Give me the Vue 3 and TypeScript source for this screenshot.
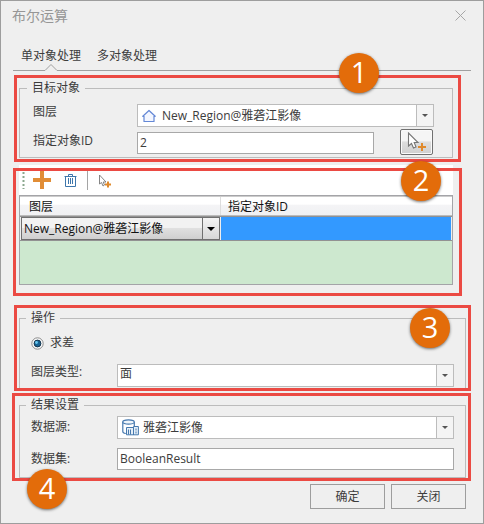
<script setup lang="ts">
import { ref } from 'vue'

interface Mark { id: number; name: string }

const tabs = ['单对象处理', '多对象处理']
const activeTab = ref(0)
const layer = 'New_Region@雅砻江影像'
const objectId = ref('2')
const datasetName = ref('BooleanResult')
const marks: Mark[] = [1, 2, 3, 4].map((id) => ({ id, name: `m${id}` }))
</script>

<template>
  <div class="dialog">
    <header class="titlebar">
      <span class="title">布尔运算</span>
      <svg class="close" width="11" height="11" viewBox="0 0 11 11"><path d="M.5.5l10 10M10.5.5l-10 10" stroke="#a6a6a6" fill="none" /></svg>
    </header>

    <nav class="tabs">
      <span v-for="(tab, i) in tabs" :key="tab" class="tab" @click="activeTab = i">{{ tab }}</span>
    </nav>
    <svg class="tabline" width="458" height="9" viewBox="0 0 458 9"><path d="M0 7.5H32L38 1.500L44 7.500H458" stroke="#a0a0a0" fill="none" /></svg>

    <section class="group target">
      <span class="legend">目标对象</span>
      <div class="row r-layer">
        <span class="label">图层</span>
        <div class="combo">
          <div class="value">
            <svg class="house" width="14" height="14" viewBox="0 0 14 14"><path d="M7 1.500L.8 7.300H2V12.500H12V7.300H13.200Z" stroke="#6488d6" stroke-width="1.200" fill="#f3f6ff" stroke-linejoin="round" /></svg>
            <span>{{ layer }}</span>
          </div>
          <i class="arrow"></i>
        </div>
      </div>
      <div class="row r-id">
        <span class="label">指定对象ID</span>
        <div class="input">{{ objectId }}</div>
        <button class="pick" type="button">
          <svg width="20" height="20" viewBox="0 0 20 20">
            <path d="M1.500 1V14L4.500 11.500L6.500 16L9 15L7.200 10.500H11Z" fill="#fff" stroke="#777" stroke-width="1.100" />
            <path d="M15 11v8M11 15h8" stroke="#e08a2c" stroke-width="2" />
          </svg>
        </button>
      </div>
    </section>

    <section class="list">
      <div class="toolbar">
        <svg width="110" height="30" viewBox="0 0 110 30">
          <path d="M4.500 7v17" stroke="#8aa78d" stroke-width="2" stroke-dasharray="2 2" />
          <path d="M23 6v18M14 15h18" stroke="#e18d36" stroke-width="4" />
          <g fill="none" stroke="#3e76ab">
            <path d="M45.500 11.500h12M49.500 11V9.500h4V11M46.500 12v9.500h10V12" />
            <path d="M49.500 13v6M51.500 13v6M53.500 13v6" />
          </g>
          <path d="M68.500 6v19" stroke="#a5a5a5" />
          <path d="M80.500 10v9L82.500 17.500L84 21L85.500 20L84.200 17H87Z" fill="#fff" stroke="#777" stroke-width=".9" />
          <path d="M89 16.500v6M86 19.500h6" stroke="#e08a2c" stroke-width="2" />
        </svg>
      </div>
      <div class="table">
        <div class="thead"><span class="th first">图层</span><span class="th">指定对象ID</span></div>
        <div class="trow">
          <div class="cellcombo"><span>{{ layer }}</span><b><i></i></b></div>
          <div class="cell"></div>
        </div>
      </div>
    </section>

    <section class="group operation">
      <span class="legend">操作</span>
      <label class="radio">
        <svg width="13" height="13" viewBox="0 0 13 13">
          <circle cx="6.500" cy="6.500" r="5.700" fill="#f8f8f8" stroke="#8b8b8b" />
          <circle cx="6.500" cy="6.500" r="3.400" fill="#176394" stroke="#17364d" />
          <circle cx="5.500" cy="5.500" r="1.400" fill="#68c8f0" />
        </svg>
        <span>求差</span>
      </label>
      <div class="row r-type">
        <span class="label">图层类型:</span>
        <div class="combo"><div class="value plain">面</div><i class="arrow"></i></div>
      </div>
    </section>

    <section class="group result">
      <span class="legend">结果设置</span>
      <div class="row r-source">
        <span class="label">数据源:</span>
        <div class="combo">
          <div class="value">
            <svg class="db" width="17" height="17" viewBox="0 0 17 17">
              <path d="M.8 3v9.500c0 1 1.500 1.800 3 2M12.300 7V3" fill="none" stroke="#4779ae" stroke-width="1.200" />
              <ellipse cx="6.500" cy="3" rx="5.800" ry="2.200" fill="#eef5fb" stroke="#4779ae" stroke-width="1.200" />
              <path d="M4.500 8.500h7V7.500h4.900v8.300H4.500z" fill="#e5eff8" stroke="#4779ae" />
              <path d="M6.500 10.500v5M8.500 10.500v5M11.500 8v8M14 9.500v2M14 12.500v2" stroke="#4779ae" />
            </svg>
            <span>雅砻江影像</span>
          </div>
          <i class="arrow"></i>
        </div>
      </div>
      <div class="row r-set">
        <span class="label">数据集:</span>
        <div class="input">{{ datasetName }}</div>
      </div>
    </section>

    <footer class="actions">
      <button type="button">确定</button>
      <button type="button">关闭</button>
    </footer>

    <div v-for="m in marks" :key="m.name" class="frame" :class="m.name"></div>
    <span v-for="m in marks" :key="m.id" class="badge" :class="m.name">{{ m.id }}</span>
  </div>
</template>

<style>
body { margin: 0; background: #efefef; }
</style>

<style scoped>
* { box-sizing: border-box; }
.dialog { position: relative; width: 484px; height: 524px; border: 1px solid #9d9d9d; background: #efefef; color: #3c3c3c; font: 12px/16px "Open Sans", "Noto Sans CJK SC", sans-serif; overflow: hidden; white-space: nowrap; }
.titlebar { height: 41px; padding: 5px 17px 0 11px; display: flex; justify-content: space-between; }
.title { font-size: 14px; line-height: 20px; color: #969696; }
.close { margin-top: 4px; }
.tabs { height: 21px; padding: 6px 0 0 20px; display: flex; gap: 16px; }
.tabline { display: block; margin-left: 12px; }
.group { margin-left: 18px; border: 1px solid #bcbcbc; display: flex; flex-direction: column; }
.legend { align-self: flex-start; height: 16px; margin: -9px 0 0 7px; padding: 0 5px; background: #efefef; }
.row { display: flex; }
.label { flex: none; }
.combo { height: 23px; border: 1px solid #bcbcbc; background: #fff; display: flex; flex: none; }
.value { flex: 1; display: flex; align-items: center; }
.plain { padding: 0 0 3px 2px; }
.arrow { width: 17px; border-left: 1px solid #bcbcbc; background: #f4f4f4; display: flex; align-items: center; justify-content: center; }
.arrow::after { content: ""; border: 3px solid transparent; border-top: 3px solid #555; border-bottom: 0; }
.input { height: 22px; border: 1px solid #a8a8a8; background: #fff; padding: 1px 0 0 2px; line-height: 18px; flex: none; }
.target { width: 434px; height: 70px; margin-top: 16px; }
.r-layer { margin-top: 8px; padding-left: 13px; height: 28px; }
.r-layer .label, .r-id .label { width: 104px; }
.r-layer .combo { width: 297px; }
.house { margin: 0 6px 0 4px; }
.r-id { padding-left: 13px; height: 22px; }
.r-id .label { padding-top: 1px; }
.r-id .input { width: 237px; }
.pick { width: 33px; height: 26px; margin: -3px 0 0 26px; padding: 0; border: 1px solid #707070; border-radius: 2px; background: linear-gradient(#f5f5f5 45%, #dedede 50%, #d0d0d0); display: flex; align-items: center; justify-content: center; box-shadow: inset 0 0 0 1px #fafafa; }
.list { width: 434px; margin: 7px 0 0 18px; }
.toolbar { height: 30px; background: #fff; }
.toolbar svg { display: block; }
.table { height: 90px; border: 1px solid #a4a4a8; background: #cde8cf; }
.thead { height: 20px; border-top: 1px solid #ccc; border-bottom: 1px solid #bbb; background: linear-gradient(#fff 40%, #f4f4f6 45%, #f0f1f3); display: flex; color: #111; }
.th { padding: 2px 0 0 7px; }
.first { width: 201px; padding-left: 9px; border-right: 1px solid #ddd; }
.trow { height: 25px; border: solid #929292; border-width: 1px 0; display: flex; background: #eee; }
.cellcombo { width: 199px; margin-left: 1px; border: 1px solid #707070; background: linear-gradient(#f2f2f2 45%, #e0e0e0 50%, #cfcfcf); display: flex; color: #111; }
.cellcombo span { flex: 1; padding: 3px 0 0 2px; }
.cellcombo b { width: 17px; border-left: 1px solid #707070; background: linear-gradient(#f4f4f4, #d7d7d7); display: flex; align-items: center; justify-content: center; }
.cellcombo i { border: 4px solid transparent; border-top-color: #000; border-bottom: 0; }
.cell { flex: 1; margin-right: 1px; margin-left: 1px; background: #3399ff; }
.operation { width: 447px; height: 72px; margin-top: 33px; border-bottom: 0; }
.operation .legend, .result .legend { margin-left: 6px; }
.radio { display: flex; align-items: center; gap: 6px; height: 18px; margin: 8px 0 0 11px; }
.r-type, .r-source, .r-set { padding-left: 11px; }
.r-type { margin-top: 12px; }
.r-type .label, .r-source .label, .r-set .label { width: 86px; }
.r-type .combo, .r-source .combo, .r-set .input { width: 337px; }
.result { width: 447px; height: 73px; margin-top: 15px; }
.r-source { margin-top: 3px; height: 32px; }
.r-source .label { padding-top: 3px; }
.db { margin: 0 4px 0 4px; }
.r-set .label { padding-top: 3px; }
.actions { display: flex; justify-content: flex-end; gap: 6px; margin-top: 6px; padding-right: 17px; }
.actions button { width: 75px; height: 25px; padding: 0; border: 1px solid #9d9d9d; background: #efefef; color: inherit; font: inherit; }
.frame { position: absolute; border: 3px solid #eb4a43; }
.frame.m1 { left: 13px; top: 74px; width: 447px; height: 87px; }
.frame.m2 { left: 12px; top: 167px; width: 449px; height: 128px; }
.frame.m3 { left: 13px; top: 304px; width: 457px; height: 86px; }
.frame.m4 { left: 11px; top: 392px; width: 459px; height: 88px; }
.badge { position: absolute; width: 40px; height: 40px; border-radius: 50%; background: #e36c0a; color: #fff; font: 29px/37px "Open Sans", sans-serif; text-align: center; box-shadow: 0 1px 3px rgba(0, 0, 0, .55); }
.badge.m1 { left: 338px; top: 52px; }
.badge.m2 { left: 400px; top: 160px; }
.badge.m3 { left: 409px; top: 307px; }
.badge.m4 { left: 26px; top: 468px; }
</style>
